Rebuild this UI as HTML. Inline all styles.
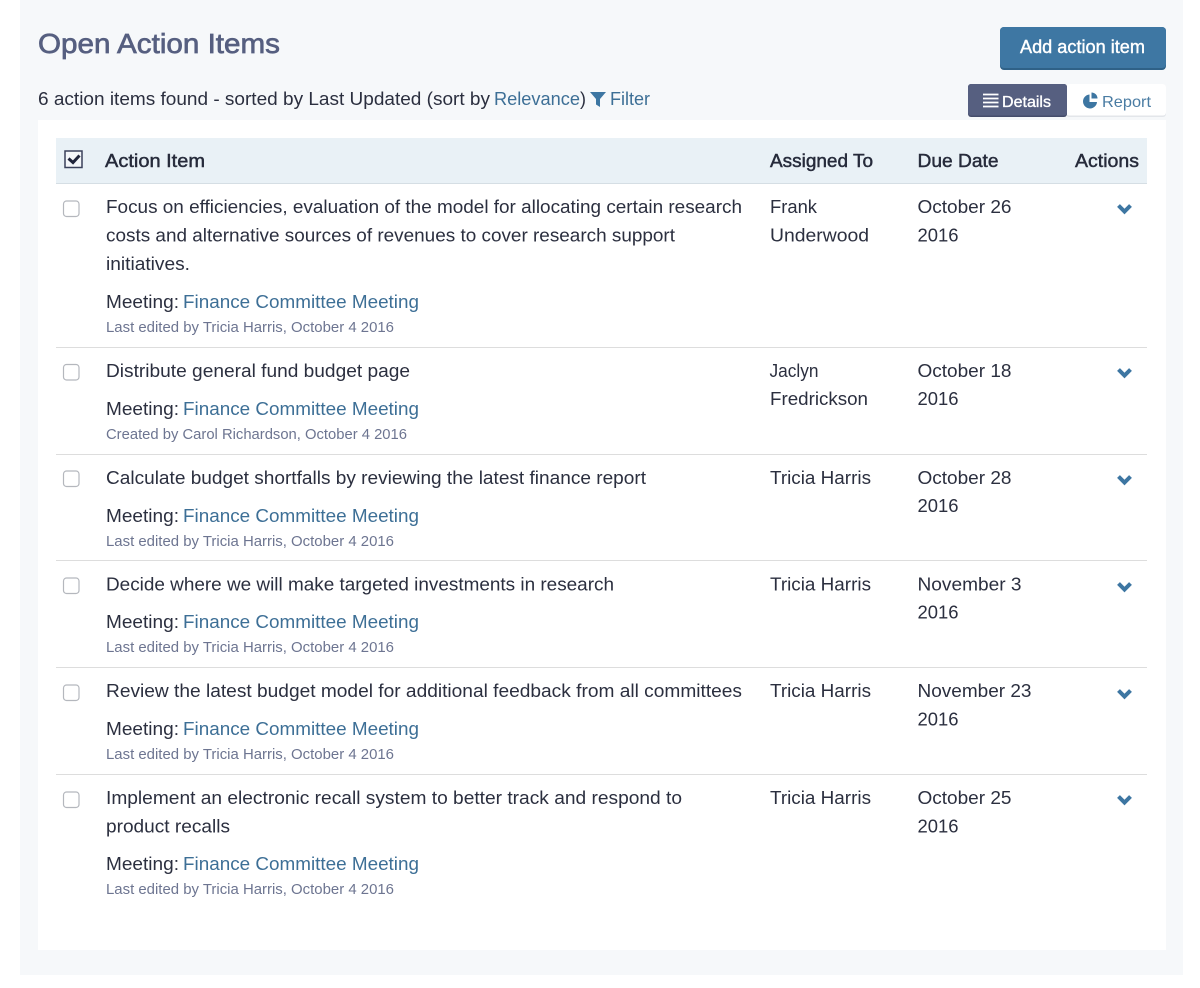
<!DOCTYPE html>
<html><head><meta charset="utf-8"><title>Open Action Items</title>
<style>
html,body{margin:0;padding:0;background:#fff;width:1200px;height:988px;overflow:hidden}
svg{display:block;font-family:"Liberation Sans",sans-serif}
.t{font-size:18px;fill:#2b2f3f}
.l{font-size:18px;fill:#3d6f96}
.s{font-size:14.5px;fill:#6d7591}
.h{font-size:18px;fill:#262b3b;stroke:#262b3b;stroke-width:.45px}
</style></head><body>
<svg width="1200" height="988" viewBox="0 0 1200 988" xmlns="http://www.w3.org/2000/svg">
<rect x="20" y="0" width="1163" height="975" fill="#f6f8fa"/>
<rect x="38" y="120" width="1128" height="830" fill="#fff"/>

<text x="38" y="53" font-size="28" fill="#565f80" stroke="#565f80" stroke-width=".7" textLength="242" lengthAdjust="spacingAndGlyphs">Open Action Items</text>
<text class="t" x="38" y="105" textLength="452" lengthAdjust="spacingAndGlyphs">6 action items found - sorted by Last Updated (sort by</text>
<text class="l" x="494" y="105" textLength="86" lengthAdjust="spacingAndGlyphs">Relevance</text>
<text class="t" x="580" y="105">)</text>
<path d="M590 92h16l-6 7v8l-4-2.500v-5.500z" fill="#3d76a2"/>
<text class="l" x="610" y="105" textLength="40" lengthAdjust="spacingAndGlyphs">Filter</text>

<rect x="1000" y="27" width="166" height="43" rx="4" fill="#2f6187"/>
<rect x="1000" y="27" width="166" height="41" rx="4" fill="#3e77a3"/>
<text x="1020" y="53" font-size="18" fill="#fff" stroke="#fff" stroke-width=".4" textLength="125" lengthAdjust="spacingAndGlyphs">Add action item</text>

<rect x="1066" y="84" width="100" height="33" rx="3" fill="#e3e6ea"/>
<rect x="1066" y="84" width="100" height="31.500" rx="3" fill="#fff"/>
<rect x="968" y="84" width="99" height="33" rx="3" fill="#454d6b"/>
<rect x="968" y="84" width="99" height="31.500" rx="3" fill="#565f80"/>
<path d="M983 94.500h15.500M983 98.500h15.500M983 102.500h15.500M983 106.500h15.500" stroke="#fff" stroke-width="1.700"/>
<text x="1002" y="107" font-size="16" fill="#fff" stroke="#fff" stroke-width=".35" textLength="49" lengthAdjust="spacingAndGlyphs">Details</text>
<path d="M1089.500 94.500a7 7 0 1 0 7.500 7.500h-7.500z" fill="#3d76a2"/>
<path d="M1091.500 92.500a6 6 0 0 1 6 6h-6z" fill="#3d76a2"/>
<text x="1102" y="107" font-size="16" fill="#4a7ca3" textLength="49" lengthAdjust="spacingAndGlyphs">Report</text>

<rect x="56" y="138" width="1091" height="45" fill="#e9f1f6"/>
<rect x="56" y="183" width="1091" height="1" fill="#d5dee4"/>
<rect x="65" y="151" width="17" height="16.500" fill="#f4f6f9" stroke="#3a415a" stroke-width="1.500"/>
<path d="M68.500 158.500l4.500 4 6.500-7" fill="none" stroke="#20243a" stroke-width="3"/>
<text class="h" x="105" y="167" textLength="100" lengthAdjust="spacingAndGlyphs">Action Item</text>
<text class="h" x="770" y="167" textLength="103" lengthAdjust="spacingAndGlyphs">Assigned To</text>
<text class="h" x="917.500" y="167" textLength="81" lengthAdjust="spacingAndGlyphs">Due Date</text>
<text class="h" x="1075" y="167" textLength="64" lengthAdjust="spacingAndGlyphs">Actions</text>

<g fill="#ddd"><rect x="56" y="347" width="1091" height="1"/><rect x="56" y="454" width="1091" height="1"/><rect x="56" y="560" width="1091" height="1"/><rect x="56" y="667" width="1091" height="1"/><rect x="56" y="774" width="1091" height="1"/></g>

<g fill="#fff" stroke="#b4b7bd" stroke-width="1.200">
<rect x="63.500" y="201" width="15.500" height="15.500" rx="3"/>
<rect x="63.500" y="364.500" width="15.500" height="15.500" rx="3"/>
<rect x="63.500" y="471" width="15.500" height="15.500" rx="3"/>
<rect x="63.500" y="578" width="15.500" height="15.500" rx="3"/>
<rect x="63.500" y="685" width="15.500" height="15.500" rx="3"/>
<rect x="63.500" y="792" width="15.500" height="15.500" rx="3"/>
</g>

<g fill="none" stroke="#3d76a2" stroke-width="4">
<path d="M1118.500 205.500l6 6 6-6"/>
<path d="M1118.500 369.500l6 6 6-6"/>
<path d="M1118.500 476.500l6 6 6-6"/>
<path d="M1118.500 583.500l6 6 6-6"/>
<path d="M1118.500 690.500l6 6 6-6"/>
<path d="M1118.500 796.500l6 6 6-6"/>
</g>

<!-- Row 1 -->
<text class="t" x="106" y="213" textLength="636" lengthAdjust="spacingAndGlyphs">Focus on efficiencies, evaluation of the model for allocating certain research</text>
<text class="t" x="106" y="241.500" textLength="569" lengthAdjust="spacingAndGlyphs">costs and alternative sources of revenues to cover research support</text>
<text class="t" x="106" y="270" textLength="84" lengthAdjust="spacingAndGlyphs">initiatives.</text>
<text class="t" x="106" y="308" textLength="73" lengthAdjust="spacingAndGlyphs">Meeting:</text>
<text class="l" x="183" y="308" textLength="236" lengthAdjust="spacingAndGlyphs">Finance Committee Meeting</text>
<text class="s" x="106" y="332" textLength="288" lengthAdjust="spacingAndGlyphs">Last edited by Tricia Harris, October 4 2016</text>
<text class="t" x="770" y="213" textLength="47" lengthAdjust="spacingAndGlyphs">Frank</text>
<text class="t" x="770" y="241.500" textLength="99" lengthAdjust="spacingAndGlyphs">Underwood</text>
<text class="t" x="917.500" y="213" textLength="94" lengthAdjust="spacingAndGlyphs">October 26</text>
<text class="t" x="917.500" y="241.500" textLength="41" lengthAdjust="spacingAndGlyphs">2016</text>

<!-- Row 2 -->
<text class="t" x="106" y="377" textLength="304" lengthAdjust="spacingAndGlyphs">Distribute general fund budget page</text>
<text class="t" x="106" y="415" textLength="73" lengthAdjust="spacingAndGlyphs">Meeting:</text>
<text class="l" x="183" y="415" textLength="236" lengthAdjust="spacingAndGlyphs">Finance Committee Meeting</text>
<text class="s" x="106" y="439" textLength="301" lengthAdjust="spacingAndGlyphs">Created by Carol Richardson, October 4 2016</text>
<text class="t" x="769.500" y="377" textLength="49" lengthAdjust="spacingAndGlyphs">Jaclyn</text>
<text class="t" x="770" y="405" textLength="98" lengthAdjust="spacingAndGlyphs">Fredrickson</text>
<text class="t" x="917.500" y="377" textLength="94" lengthAdjust="spacingAndGlyphs">October 18</text>
<text class="t" x="917.500" y="405" textLength="41" lengthAdjust="spacingAndGlyphs">2016</text>

<!-- Row 3 -->
<text class="t" x="106" y="484" textLength="540" lengthAdjust="spacingAndGlyphs">Calculate budget shortfalls by reviewing the latest finance report</text>
<text class="t" x="106" y="522" textLength="73" lengthAdjust="spacingAndGlyphs">Meeting:</text>
<text class="l" x="183" y="522" textLength="236" lengthAdjust="spacingAndGlyphs">Finance Committee Meeting</text>
<text class="s" x="106" y="546" textLength="288" lengthAdjust="spacingAndGlyphs">Last edited by Tricia Harris, October 4 2016</text>
<text class="t" x="770" y="484" textLength="101" lengthAdjust="spacingAndGlyphs">Tricia Harris</text>
<text class="t" x="917.500" y="484" textLength="94" lengthAdjust="spacingAndGlyphs">October 28</text>
<text class="t" x="917.500" y="512" textLength="41" lengthAdjust="spacingAndGlyphs">2016</text>

<!-- Row 4 -->
<text class="t" x="106" y="590.500" textLength="508" lengthAdjust="spacingAndGlyphs">Decide where we will make targeted investments in research</text>
<text class="t" x="106" y="628" textLength="73" lengthAdjust="spacingAndGlyphs">Meeting:</text>
<text class="l" x="183" y="628" textLength="236" lengthAdjust="spacingAndGlyphs">Finance Committee Meeting</text>
<text class="s" x="106" y="652" textLength="288" lengthAdjust="spacingAndGlyphs">Last edited by Tricia Harris, October 4 2016</text>
<text class="t" x="770" y="590.500" textLength="101" lengthAdjust="spacingAndGlyphs">Tricia Harris</text>
<text class="t" x="917.500" y="590.500" textLength="104" lengthAdjust="spacingAndGlyphs">November 3</text>
<text class="t" x="917.500" y="618.500" textLength="41" lengthAdjust="spacingAndGlyphs">2016</text>

<!-- Row 5 -->
<text class="t" x="106" y="697" textLength="636" lengthAdjust="spacingAndGlyphs">Review the latest budget model for additional feedback from all committees</text>
<text class="t" x="106" y="735" textLength="73" lengthAdjust="spacingAndGlyphs">Meeting:</text>
<text class="l" x="183" y="735" textLength="236" lengthAdjust="spacingAndGlyphs">Finance Committee Meeting</text>
<text class="s" x="106" y="759" textLength="288" lengthAdjust="spacingAndGlyphs">Last edited by Tricia Harris, October 4 2016</text>
<text class="t" x="770" y="697" textLength="101" lengthAdjust="spacingAndGlyphs">Tricia Harris</text>
<text class="t" x="917.500" y="697" textLength="114" lengthAdjust="spacingAndGlyphs">November 23</text>
<text class="t" x="917.500" y="725.500" textLength="41" lengthAdjust="spacingAndGlyphs">2016</text>

<!-- Row 6 -->
<text class="t" x="106" y="804" textLength="576" lengthAdjust="spacingAndGlyphs">Implement an electronic recall system to better track and respond to</text>
<text class="t" x="106" y="832.500" textLength="124" lengthAdjust="spacingAndGlyphs">product recalls</text>
<text class="t" x="106" y="870" textLength="73" lengthAdjust="spacingAndGlyphs">Meeting:</text>
<text class="l" x="183" y="870" textLength="236" lengthAdjust="spacingAndGlyphs">Finance Committee Meeting</text>
<text class="s" x="106" y="894" textLength="288" lengthAdjust="spacingAndGlyphs">Last edited by Tricia Harris, October 4 2016</text>
<text class="t" x="770" y="804" textLength="101" lengthAdjust="spacingAndGlyphs">Tricia Harris</text>
<text class="t" x="917.500" y="804" textLength="94" lengthAdjust="spacingAndGlyphs">October 25</text>
<text class="t" x="917.500" y="832.500" textLength="41" lengthAdjust="spacingAndGlyphs">2016</text>
</svg>
</body></html>
